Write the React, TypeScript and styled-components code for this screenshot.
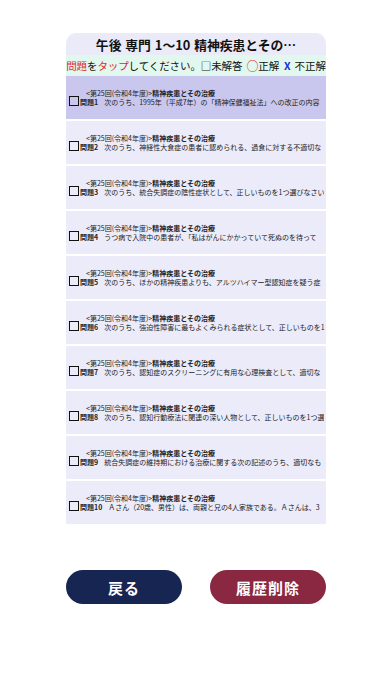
import React from "react";
import styled, { createGlobalStyle } from "styled-components";

const Global = createGlobalStyle`
  html, body { margin: 0; padding: 0; background: #ffffff; }
  body { font-family: "Noto Sans CJK JP", "Noto Sans", sans-serif; }
`;

const Page = styled.div`
  width: 392px;
  height: 696px;
  display: flex;
  flex-direction: column;
  align-items: center;
  padding-top: 33px;
  box-sizing: border-box;
`;

const Panel = styled.div`
  width: 260px;
  display: flex;
  flex-direction: column;
`;

const Title = styled.div`
  height: 22px;
  background: #eaeaf8;
  border-radius: 10px 10px 0 0;
  display: flex;
  align-items: center;
  justify-content: center;
  font-size: 12.8px;
  font-weight: 700;
  color: #111;
  white-space: nowrap;
  word-spacing: 1px;
`;

const Hint = styled.div`
  height: 21px;
  background: #e2f7ee;
  display: flex;
  align-items: center;
  justify-content: center;
  font-size: 10.5px;
  color: #111;
  white-space: pre;
  letter-spacing: -0.1px;
`;

const Red = styled.span`
  color: #e0262f;
`;

const Circle = styled.span`
  color: #e0262f;
  font-size: 12px;
  margin-left: 4px;
`;

const Blue = styled.span`
  color: #1c2fd8;
  font-weight: 700;
  margin: 0 4px 0 5px;
`;

const List = styled.div`
  display: flex;
  flex-direction: column;
  gap: 2px;
`;

const Row = styled.div<{ $active?: boolean }>`
  height: 43px;
  background: ${(p) => (p.$active ? "#c9c7ee" : "#ebebfa")};
  display: flex;
  align-items: center;
  padding: 1px 0 0 3px;
  box-sizing: border-box;
  overflow: hidden;
`;

const Box = styled.div`
  width: 8px;
  height: 8px;
  border: 1.3px solid #111;
  flex: none;
  margin-top: 6px;
`;

const Texts = styled.div`
  display: flex;
  flex-direction: column;
  margin-left: 1px;
  font-size: 7px;
  line-height: 9px;
  color: #222;
  white-space: nowrap;
  overflow: hidden;
`;

const Line1 = styled.div`
  padding-left: 6px;
`;

const Bold = styled.span`
  font-weight: 700;
`;

const Num = styled.span`
  font-weight: 700;
  margin-right: 6px;
`;

const Buttons = styled.div`
  width: 260px;
  display: flex;
  justify-content: space-between;
  margin-top: 46px;
`;

const Button = styled.button<{ $color: string }>`
  width: 116px;
  height: 34px;
  border-radius: 17px;
  border: none;
  background: ${(p) => p.$color};
  color: #fff;
  font-family: "Noto Sans CJK JP", sans-serif;
  font-size: 15px;
  font-weight: 700;
  letter-spacing: 1px;
  padding: 0;
`;

const items = [
  "次のうち、1995年（平成7年）の「精神保健福祉法」への改正の内容",
  "次のうち、神経性大食症の患者に認められる、過食に対する不適切な",
  "次のうち、統合失調症の陰性症状として、正しいものを1つ選びなさい",
  "うつ病で入院中の患者が、「私はがんにかかっていて死ぬのを待って",
  "次のうち、ほかの精神疾患よりも、アルツハイマー型認知症を疑う症",
  "次のうち、強迫性障害に最もよくみられる症状として、正しいものを1",
  "次のうち、認知症のスクリーニングに有用な心理検査として、適切な",
  "次のうち、認知行動療法に関連の深い人物として、正しいものを1つ選",
  "統合失調症の維持期における治療に関する次の記述のうち、適切なも",
  "Ａさん（20歳、男性）は、両親と兄の4人家族である。Ａさんは、3",
];

export default function App() {
  return (
    <Page>
      <Global />
      <Panel>
        <Title>午後 専門 1〜10 精神疾患とその…</Title>
        <Hint>
          <Red>問題</Red>を<Red>タップ</Red>してください。□未解答<Circle>○</Circle>正解<Blue>X</Blue>不正解
        </Hint>
        <List>
          {items.map((t, i) => (
            <Row key={i} $active={i === 0}>
              <Box />
              <Texts>
                <Line1>
                  &lt;第25回(令和4年度)&gt;<Bold>精神疾患とその治療</Bold>
                </Line1>
                <div>
                  <Num>問題{i + 1}</Num>
                  {t}
                </div>
              </Texts>
            </Row>
          ))}
        </List>
      </Panel>
      <Buttons>
        <Button $color="#172552">戻る</Button>
        <Button $color="#8a2741">履歴削除</Button>
      </Buttons>
    </Page>
  );
}
